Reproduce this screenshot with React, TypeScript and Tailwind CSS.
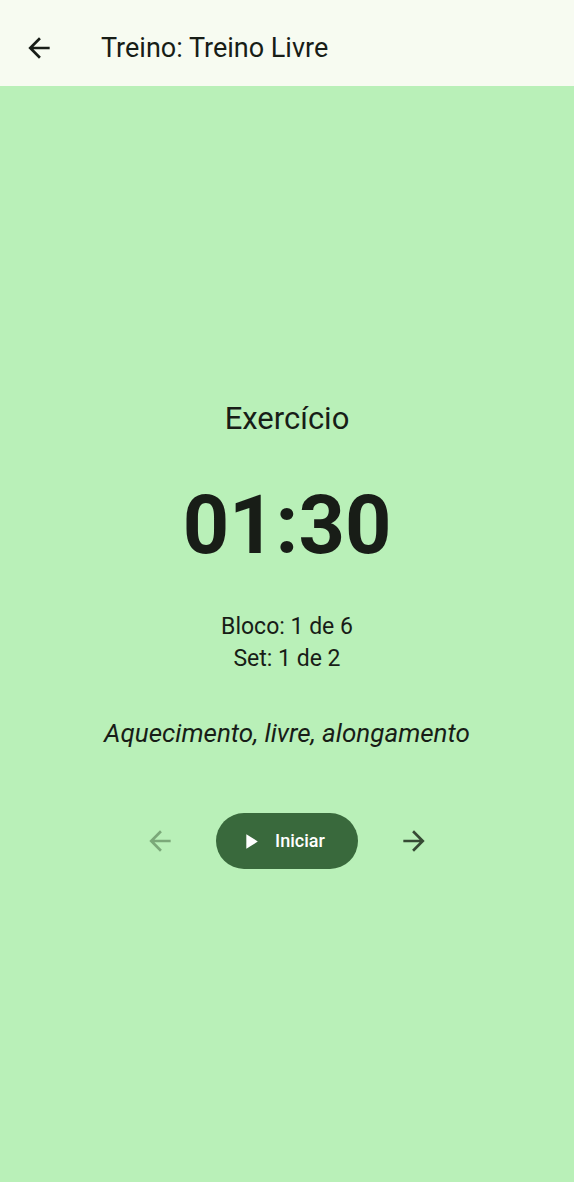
import React from "react";
import { MdArrowBack, MdArrowForward, MdPlayArrow } from "react-icons/md";

export default function App() {
  return (
    <div className="flex min-h-screen flex-col bg-[#b9f0b8] font-['Roboto',sans-serif] text-[#181d17]">
      <header className="flex items-center gap-[46px] bg-[#f7fbf1] px-[23px] pt-[30px] pb-5">
        <button type="button" aria-label="Voltar" className="flex size-8 items-center justify-center">
          <MdArrowBack className="size-8" />
        </button>
        <h1 className="text-[27px] leading-9">Treino: Treino Livre</h1>
      </header>
      <main className="flex flex-1 flex-col items-center justify-center px-6 text-center">
        <h2 className="text-[31px] leading-10">Exercício</h2>
        <p className="mt-10 text-[81px] leading-[94px] font-bold">01:30</p>
        <p className="mt-[38px] text-[23px] leading-8">Bloco: 1 de 6</p>
        <p className="text-[23px] leading-8">Set: 1 de 2</p>
        <p className="mt-10 text-[26px] leading-9 italic">Aquecimento, livre, alongamento</p>
        <div className="mt-[62px] flex items-center gap-10">
          <button type="button" disabled aria-label="Anterior" className="flex size-8 items-center justify-center text-[#7ba879]">
            <MdArrowBack className="size-8" />
          </button>
          <button type="button" className="flex h-14 items-center gap-3 rounded-full bg-[#39693c] pr-[33px] pl-[22px] text-[18px] leading-6 font-medium text-white">
            <MdPlayArrow className="size-[25px]" />
            Iniciar
          </button>
          <button type="button" aria-label="Próximo" className="flex size-8 items-center justify-center text-[#364a34]">
            <MdArrowForward className="size-8" />
          </button>
        </div>
      </main>
    </div>
  );
}
